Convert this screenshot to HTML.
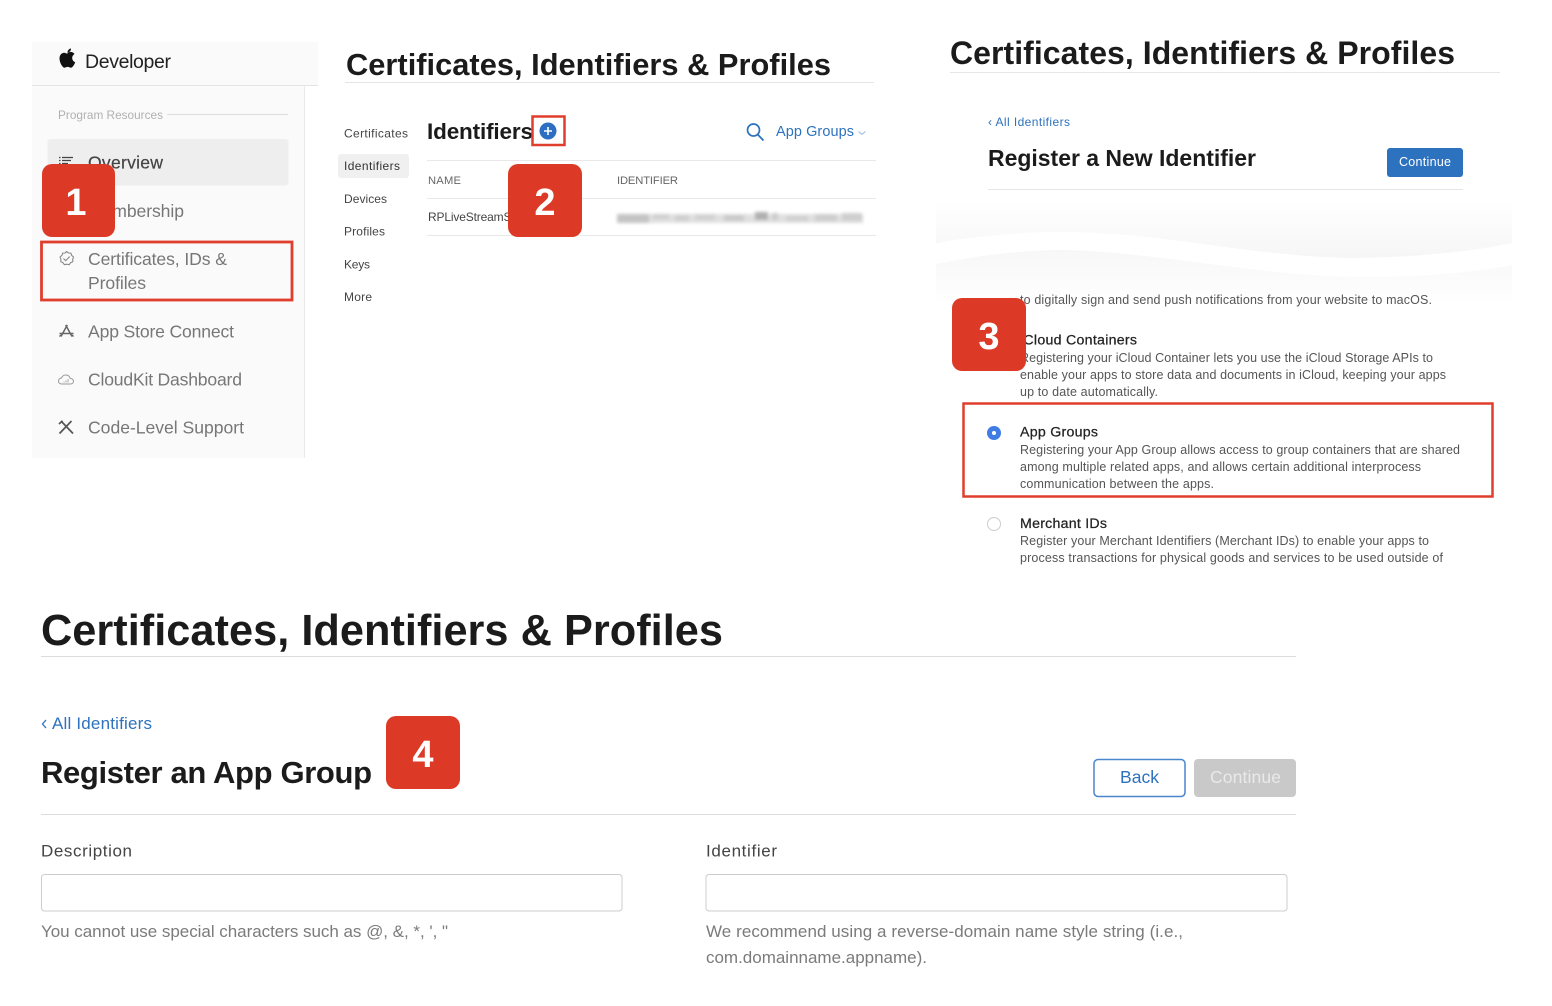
<!DOCTYPE html>
<html lang="en">
<head>
<meta charset="utf-8">
<title>Certificates, Identifiers &amp; Profiles</title>
<style>
html,body{margin:0;padding:0;background:#fff;width:1552px;height:1006px;overflow:hidden}
svg{display:block;filter:blur(.35px)}
text{font-family:"Liberation Sans",sans-serif;white-space:pre}
.b{font-weight:700;fill:#1b1b1b}
.num{font-weight:700;fill:#fff;font-size:38px;text-anchor:middle}
.side{font-size:17.6px;fill:#777}
.nav{font-size:12px;fill:#444}
.desc{font-size:12.5px;fill:#555}
.h{font-size:14.2px;fill:#222;stroke:#222;stroke-width:.25px}
.link{fill:#2e72bd}
.lab{font-size:17px;fill:#444}
.hint{font-size:17px;fill:#7b7b7b}
</style>
</head>
<body>
<svg width="1552" height="1006" viewBox="0 0 1552 1006" xmlns="http://www.w3.org/2000/svg">
<defs>
<linearGradient id="g1" x1="0" y1="0" x2="0" y2="1"><stop offset="0" stop-color="#fff"/><stop offset="1" stop-color="#f6f6f6"/></linearGradient>
<linearGradient id="g2" x1="0" y1="0" x2="0" y2="1"><stop offset="0" stop-color="#f7f7f7"/><stop offset="1" stop-color="#fff"/></linearGradient>
<filter id="bl" x="-5%" y="-50%" width="110%" height="200%"><feGaussianBlur stdDeviation="1.500"/></filter>
</defs>
<rect width="1552" height="1006" fill="#fff"/>

<!-- Panel 1 -->
<rect x="32" y="42" width="286" height="43" fill="#fafafa"/>
<rect x="32" y="85" width="286" height="1" fill="#e4e4e4"/>
<rect x="32" y="86" width="272" height="372" fill="#fafafa"/>
<rect x="304" y="86" width="1" height="372" fill="#e9e9e9"/>
<path d="M67.600 53.600c-1.300 0-2.300-.9-3.500-.9-1.800 0-4.600 1.600-4.600 5.700 0 4 2.800 9.300 5 9.300 1.100 0 1.700-.8 3.100-.8s1.900.8 3.100.8c1.900 0 3.700-3.200 4.500-5.500-1.900-.8-3-2.300-3-4.300 0-1.700 1-3.100 2.300-3.900-1-1.400-2.600-2.100-4-2.100-1.100 0-1.600.7-3 .7z" fill="#111"/>
<path d="M67.500 52.500c0-2 1.500-3.800 3.500-4 .1 2.100-1.500 4-3.500 4z" fill="#111"/>
<text x="85" y="68" font-size="19.500" fill="#222" textLength="86">Developer</text>
<text x="58" y="119" font-size="11.800" fill="#b0b0b0" textLength="105">Program Resources</text>
<rect x="167" y="114" width="121" height="1" fill="#ddd"/>
<rect x="47.500" y="139" width="241" height="46.500" rx="3" fill="#eeeeee"/>
<path d="M59 157.500h1.500M59 160.500h1.500M59 163.500h1.500M62 157.500h11M62 160.500h9M62 163.500h6" stroke="#444" stroke-width="1.200" fill="none"/>
<text x="88" y="168.500" font-size="17.600" fill="#444" stroke="#444" stroke-width=".2" textLength="75">Overview</text>
<text x="88" y="217" class="side" textLength="96">Membership</text>
<path d="M66.500 251.500l2 1.500 2.400.1.800 2.300 1.800 1.600-.8 2.300.1 2.400-2.200 1-1.400 2-2.400-.5-2.400.5-1.400-2-2.200-1 .1-2.400-.8-2.300 1.800-1.600.8-2.300 2.400-.1z" fill="none" stroke="#888" stroke-width="1.100"/>
<path d="M63.500 258.500l2.200 2.200 4-4.200" fill="none" stroke="#888" stroke-width="1.100"/>
<text x="88" y="265" class="side" textLength="139">Certificates, IDs &amp;</text>
<text x="88" y="289" class="side" textLength="58">Profiles</text>
<path d="M67.300 325l-6.300 11.500M65.700 325l6.300 11.500M59.500 333.500h14M59.500 336.500l1.500-1.500M73.500 336.500l-1.500-1.500" fill="none" stroke="#666" stroke-width="1.500"/>
<text x="88" y="337.500" class="side" textLength="146">App Store Connect</text>
<path d="M62 384c-2.600 0-3.500-1.600-3.500-3 0-1.700 1.300-2.900 3-3 .8-2 2.400-3 4.300-3 2.300 0 3.900 1.500 4.400 3.400 1.600.2 3.300 1 3.300 2.900 0 1.700-1.400 2.700-3.200 2.700z" fill="none" stroke="#999" stroke-width="1"/>
<path d="M64 382.500v-1M66 382.500v-2M68 382.500v-3.500" stroke="#aaa" stroke-width="1" fill="none"/>
<text x="88" y="385.500" class="side" textLength="154">CloudKit Dashboard</text>
<path d="M59.500 433.500l12-12.500M61.500 421.500l11.500 12M59 424l3.500-3.200" fill="none" stroke="#555" stroke-width="1.700"/>
<text x="88" y="433.500" class="side" textLength="156">Code-Level Support</text>
<rect x="41.500" y="242" width="250.500" height="58" fill="none" stroke="#df3e2d" stroke-width="2.800"/>
<rect x="42" y="164" width="73" height="73" rx="10" fill="#dc3a26"/>
<text x="76" y="215" class="num">1</text>

<!-- Panel 2 -->
<text x="346" y="75" class="b" font-size="30.800" textLength="485">Certificates, Identifiers &amp; Profiles</text>
<rect x="345" y="82" width="529" height="1" fill="#e4e4e4"/>
<rect x="338" y="154" width="71" height="24" rx="3" fill="#f0f0f0"/>
<text x="344" y="137.500" class="nav" textLength="64">Certificates</text>
<text x="344" y="170" class="nav" textLength="56" style="fill:#333">Identifiers</text>
<text x="344" y="203" class="nav" textLength="43">Devices</text>
<text x="344" y="235.500" class="nav" textLength="41">Profiles</text>
<text x="344" y="268.500" class="nav" textLength="26">Keys</text>
<text x="344" y="301" class="nav" textLength="28">More</text>
<text x="427" y="139" class="b" font-size="22.500" textLength="106">Identifiers</text>
<circle cx="548" cy="131" r="8.500" fill="#2c6fc2"/>
<path d="M544 131h8M548 127v8" stroke="#fff" stroke-width="1.600"/>
<rect x="532.500" y="116.500" width="32" height="28.500" fill="none" stroke="#df3e2d" stroke-width="2.500"/>
<circle cx="753.500" cy="130" r="6" fill="none" stroke="#2e72bd" stroke-width="1.700"/>
<path d="M757.700 134.500l5.800 6" stroke="#2e72bd" stroke-width="1.800" fill="none"/>
<text x="776" y="136" class="link" font-size="14.500" textLength="78">App Groups</text>
<path d="M858.500 131.500l3.500 2.800 3.500-2.800" fill="none" stroke="#9db8d8" stroke-width="1"/>
<rect x="427" y="160" width="449" height="1" fill="#e8e8e8"/>
<text x="428" y="184" font-size="11.200" fill="#666" textLength="33">NAME</text>
<text x="617" y="184" font-size="11.200" fill="#666" textLength="61">IDENTIFIER</text>
<rect x="427" y="198" width="449" height="1" fill="#e8e8e8"/>
<text x="428" y="221" font-size="12" fill="#444" textLength="90">RPLiveStreamSe</text>
<rect x="427" y="235" width="449" height="1" fill="#e8e8e8"/>
<g filter="url(#bl)">
<rect x="617" y="214" width="246" height="9" fill="#e0e0e0"/>
<rect x="617" y="214" width="32" height="9" fill="#c4c4c4"/>
<rect x="653" y="214" width="16" height="5" fill="#cfcfcf"/>
<rect x="675" y="215" width="14" height="6" fill="#d0d0d0"/>
<rect x="695" y="214" width="20" height="6" fill="#d2d2d2"/>
<rect x="724" y="215" width="20" height="6" fill="#cbcbcb"/>
<rect x="755" y="212" width="13" height="8" fill="#b0b0b0"/>
<rect x="772" y="213" width="6" height="7" fill="#cccccc"/>
<rect x="786" y="216" width="22" height="5" fill="#d0d0d0"/>
<rect x="815" y="214" width="22" height="7" fill="#cdcdcd"/>
<rect x="842" y="213" width="20" height="8" fill="#cfcfcf"/>
</g>
<rect x="508" y="164" width="74" height="73" rx="10" fill="#dc3a26"/>
<text x="545" y="215" class="num">2</text>

<!-- Panel 3 -->
<text x="950" y="64" class="b" font-size="32" textLength="505">Certificates, Identifiers &amp; Profiles</text>
<rect x="950" y="72" width="550" height="1" fill="#e6e6e6"/>
<text x="988" y="126" class="link" font-size="12" textLength="82">‹ All Identifiers</text>
<text x="988" y="166" class="b" font-size="23" textLength="268">Register a New Identifier</text>
<rect x="1387" y="148" width="76" height="29" rx="3" fill="#2d72bf"/>
<text x="1399" y="166" font-size="12.500" fill="#fff" textLength="52">Continue</text>
<rect x="988" y="189" width="475" height="1" fill="#e6e6e6"/>
<path d="M936 200H1512V243C1470 252 1410 258 1348 258C1250 256 1160 232 1063 232C1020 232 975 236 936 243Z" fill="url(#g1)"/>
<path d="M936 264C975 256 1020 250 1063 250C1160 252 1260 277 1367 277C1420 277 1470 273 1512 265V305H936Z" fill="url(#g2)"/>
<text x="1020" y="304" class="desc" textLength="412">to digitally sign and send push notifications from your website to macOS.</text>
<text x="1020" y="344.500" class="h" textLength="117">iCloud Containers</text>
<text x="1020" y="362" class="desc" textLength="413">Registering your iCloud Container lets you use the iCloud Storage APIs to</text>
<text x="1020" y="379" class="desc" textLength="426">enable your apps to store data and documents in iCloud, keeping your apps</text>
<text x="1020" y="396" class="desc" textLength="138">up to date automatically.</text>
<rect x="963.500" y="403.500" width="529" height="93" fill="none" stroke="#df3e2d" stroke-width="2.500"/>
<circle cx="994" cy="433" r="7" fill="#3f7de4"/>
<circle cx="994" cy="433" r="2" fill="#fff"/>
<text x="1020" y="436.500" class="h" textLength="78">App Groups</text>
<text x="1020" y="454" class="desc" textLength="440">Registering your App Group allows access to group containers that are shared</text>
<text x="1020" y="471" class="desc" textLength="401">among multiple related apps, and allows certain additional interprocess</text>
<text x="1020" y="488" class="desc" textLength="194">communication between the apps.</text>
<circle cx="994" cy="524" r="6.500" fill="#fff" stroke="#ccc" stroke-width="1"/>
<text x="1020" y="528" class="h" textLength="87">Merchant IDs</text>
<text x="1020" y="545" class="desc" textLength="409">Register your Merchant Identifiers (Merchant IDs) to enable your apps to</text>
<text x="1020" y="562" class="desc" textLength="423">process transactions for physical goods and services to be used outside of</text>
<rect x="952" y="298" width="74" height="73" rx="10" fill="#dc3a26"/>
<text x="989" y="349" class="num">3</text>

<!-- Panel 4 -->
<text x="41" y="645" class="b" font-size="43.300" textLength="682">Certificates, Identifiers &amp; Profiles</text>
<rect x="41" y="656" width="1255" height="1" fill="#dcdcdc"/>
<path d="M46 720l-3.500 4 3.500 4" fill="none" stroke="#2e72bd" stroke-width="1.300"/>
<text x="52" y="729" class="link" font-size="17" textLength="100">All Identifiers</text>
<text x="41" y="783" class="b" font-size="31" textLength="331">Register an App Group</text>
<rect x="386" y="716" width="74" height="73" rx="10" fill="#dc3a26"/>
<text x="423" y="767" class="num">4</text>
<rect x="1094" y="759.500" width="91" height="37" rx="4" fill="#fff" stroke="#4a86cc" stroke-width="1.500"/>
<text x="1120" y="783" class="link" font-size="17.500" textLength="39">Back</text>
<rect x="1194" y="759" width="102" height="38" rx="4" fill="#c9c9c9"/>
<text x="1210" y="783" font-size="17.500" fill="#e9e9e9" textLength="71">Continue</text>
<rect x="41" y="814" width="1255" height="1" fill="#dcdcdc"/>
<text x="41" y="856.500" class="lab" textLength="91">Description</text>
<text x="706" y="856.500" class="lab" textLength="71">Identifier</text>
<rect x="41.500" y="874.500" width="580.500" height="36.500" rx="3" fill="#fff" stroke="#ccc"/>
<rect x="706" y="874.500" width="581" height="36.500" rx="3" fill="#fff" stroke="#ccc"/>
<text x="41" y="937" class="hint" textLength="407">You cannot use special characters such as @, &amp;, *, ', "</text>
<text x="706" y="937" class="hint" textLength="477">We recommend using a reverse-domain name style string (i.e.,</text>
<text x="706" y="963" class="hint" textLength="221">com.domainname.appname).</text>
</svg>
</body>
</html>
